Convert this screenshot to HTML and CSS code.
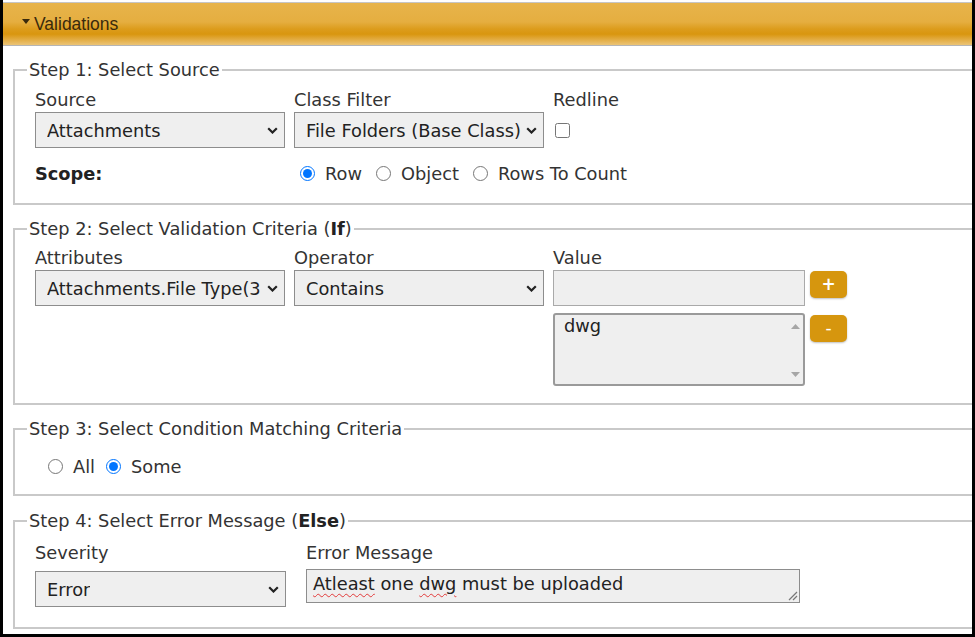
FILE: index.html
```html
<!DOCTYPE html>
<html>
<head>
<meta charset="utf-8">
<link rel="stylesheet" href="styles.css">
</head>
<body>
<div class="frame">
  <div class="header"><span class="tri"></span><span class="htitle">Validations</span></div>
  <div class="content">
    <fieldset class="fs fs1">
      <legend>Step 1: Select Source</legend>
      <div class="grid3">
        <div class="lbl">Source</div>
        <div class="lbl">Class Filter</div>
        <div class="lbl">Redline</div>
        <div class="sel"><span>Attachments</span><svg class="chev" width="11" height="7" viewBox="0 0 11 7"><path d="M1.2 1.2 L5.5 5.5 L9.8 1.2" fill="none" stroke="#222" stroke-width="2.2"/></svg></div>
        <div class="sel"><span>File Folders (Base Class)</span><svg class="chev" width="11" height="7" viewBox="0 0 11 7"><path d="M1.2 1.2 L5.5 5.5 L9.8 1.2" fill="none" stroke="#222" stroke-width="2.2"/></svg></div>
        <div class="cbcell"><input type="checkbox" class="cb"></div>
      </div>
      <div class="scope">
        <div class="scopelbl">Scope:</div>
        <div class="radios">
          <label class="ropt"><input type="radio" name="s" checked><span>Row</span></label>
          <label class="ropt"><input type="radio" name="s"><span>Object</span></label>
          <label class="ropt"><input type="radio" name="s"><span>Rows To Count</span></label>
        </div>
      </div>
    </fieldset>

    <fieldset class="fs fs2">
      <legend>Step 2: Select Validation Criteria (<b>If</b>)</legend>
      <div class="grid3">
        <div class="lbl">Attributes</div>
        <div class="lbl">Operator</div>
        <div class="lbl">Value</div>
        <div class="sel"><span>Attachments.File Type(3</span><svg class="chev" width="11" height="7" viewBox="0 0 11 7"><path d="M1.2 1.2 L5.5 5.5 L9.8 1.2" fill="none" stroke="#222" stroke-width="2.2"/></svg></div>
        <div class="sel"><span>Contains</span><svg class="chev" width="11" height="7" viewBox="0 0 11 7"><path d="M1.2 1.2 L5.5 5.5 L9.8 1.2" fill="none" stroke="#222" stroke-width="2.2"/></svg></div>
        <div class="valcol">
          <div class="valrow">
            <div class="vinput"></div>
            <div class="btn btnplus">+</div>
          </div>
          <div class="valrow listrow">
            <div class="listbox">
              <div class="litem">dwg</div>
              <div class="sbar">
                <svg width="9" height="5" viewBox="0 0 9 5"><path d="M0 5 L4.5 0 L9 5 Z" fill="#a6a6a6"/></svg>
                <svg width="9" height="5" viewBox="0 0 9 5"><path d="M0 0 L4.5 5 L9 0 Z" fill="#a6a6a6"/></svg>
              </div>
            </div>
            <div class="btn btnminus">-</div>
          </div>
        </div>
      </div>
    </fieldset>

    <fieldset class="fs fs3">
      <legend>Step 3: Select Condition Matching Criteria</legend>
      <div class="radios r3">
        <label class="ropt"><input type="radio" name="m"><span>All</span></label>
        <label class="ropt"><input type="radio" name="m" checked><span>Some</span></label>
      </div>
    </fieldset>

    <fieldset class="fs fs4">
      <legend>Step 4: Select Error Message (<b>Else</b>)</legend>
      <div class="grid2">
        <div class="lbl">Severity</div>
        <div class="lbl">Error Message</div>
        <div class="sel sel4"><span>Error</span><svg class="chev" width="11" height="7" viewBox="0 0 11 7"><path d="M1.2 1.2 L5.5 5.5 L9.8 1.2" fill="none" stroke="#222" stroke-width="2.2"/></svg></div>
        <div class="tarea"><span class="sp">Atleast</span> one <span class="sp">dwg</span> must be uploaded<svg class="grip" width="11" height="11" viewBox="0 0 11 11"><path d="M10 2 L2 10 M10 6 L6 10" stroke="#777" stroke-width="1.2"/></svg></div>
      </div>
    </fieldset>
  </div>
</div>
</body>
</html>
```

FILE: styles.css
```css
html, body {
  margin: 0;
  padding: 0;
  background: #fff;
}
.frame {
  width: 975px;
  height: 637px;
  box-sizing: border-box;
  border-left: 3px solid #000;
  border-right: 3px solid #000;
  border-bottom: 3px solid #000;
  padding-top: 2px;
  overflow: hidden;
  background: #fff;
  font-family: "DejaVu Sans", Verdana, sans-serif;
  font-size: 17.8px;
  color: #333;
}
.header {
  height: 42px;
  border-top: 1px solid #c6c6c6;
  border-bottom: 1px solid #b5b5b5;
  background: linear-gradient(to bottom, #e7b44b 0%, #e5ae40 45%, #dc9c1c 62%, #d9960f 74%, #e2aa3e 86%, #ebc476 100%);
  display: flex;
  align-items: center;
  padding-left: 19px;
  font-family: "Liberation Sans", Arial, sans-serif;
  font-size: 17.5px;
  color: #3a2a0c;
}
.tri {
  width: 0;
  height: 0;
  border-left: 4px solid transparent;
  border-right: 4px solid transparent;
  border-top: 5px solid #3a2a0c;
  margin-right: 4px;
  margin-top: -6px;
}
.htitle {
  margin-top: 1px;
}
.content {
  padding-left: 10px;
  margin-right: -40px;
}
.fs {
  margin: 0;
  border: 2px solid #c9c9c9;
  border-right: none;
  padding: 10px 0 0 20px;
}
.fs legend {
  margin-left: -8px;
  padding: 0 2px;
  line-height: 20px;
  color: #333;
}
.fs legend b {
  font-weight: bold;
  color: #222;
}
.fs1 { margin-top: 14px; padding-bottom: 17px; }
.fs2 { margin-top: 14px; padding-top: 9px; padding-bottom: 17px; }
.fs3 { margin-top: 14px; padding-top: 14px; padding-bottom: 15px; }
.fs4 { margin-top: 15px; padding-top: 12px; padding-bottom: 20px; }

.grid3 {
  display: grid;
  grid-template-columns: 250px 250px 300px;
  column-gap: 9px;
  row-gap: 2px;
  align-items: start;
}
.grid2 {
  display: grid;
  grid-template-columns: 251px 494px;
  column-gap: 20px;
  row-gap: 6px;
  align-items: start;
}
.lbl {
  line-height: 20px;
  height: 20px;
  color: #333;
  white-space: nowrap;
}
.sel {
  height: 36px;
  box-sizing: border-box;
  border: 1px solid #8d8d8d;
  background: #efefef;
  display: flex;
  align-items: center;
  justify-content: space-between;
  padding: 0 6px 0 11px;
  color: #222;
  white-space: nowrap;
  overflow: hidden;
}
.sel span {
  overflow: hidden;
}
.sel4 { margin-top: 2px; }
.chev { flex: none; margin-left: 3px; }
.cbcell {
  height: 36px;
  display: flex;
  align-items: center;
}
.cb {
  width: 15px;
  height: 15px;
  margin: 0 0 0 2px;
}
.scope {
  display: flex;
  align-items: center;
  height: 26px;
  margin-top: 12px;
}
.scopelbl {
  width: 265px;
  font-weight: bold;
  color: #222;
}
.radios {
  display: flex;
  align-items: center;
}
.ropt {
  display: flex;
  align-items: center;
  margin-right: 14px;
}
.ropt input {
  width: 15px;
  height: 15px;
  margin: 0 10px 0 0;
}
.r3 {
  height: 26px;
  padding-left: 13px;
}
.r3 .ropt { margin-right: 11px; }
.valcol {
  display: flex;
  flex-direction: column;
  gap: 7px;
}
.valrow {
  display: flex;
  align-items: flex-start;
  gap: 5px;
}
.vinput {
  width: 252px;
  height: 36px;
  box-sizing: border-box;
  border: 1px solid #a9a9a9;
  background: #efefef;
}
.btn {
  width: 37px;
  height: 27px;
  margin-top: 1px;
  border-radius: 5px;
  background: #d6960e;
  box-shadow: 0 1px 2px rgba(0,0,0,0.25);
  color: #fff;
  font-weight: bold;
  font-size: 17px;
  display: flex;
  align-items: center;
  justify-content: center;
  line-height: 1;
}
.btnminus { margin-top: 2px; font-weight: normal; }
.listbox {
  width: 252px;
  height: 73px;
  box-sizing: border-box;
  border: 2px solid #9a9a9a;
  border-radius: 3px;
  background: #efefef;
  display: flex;
  justify-content: space-between;
}
.litem {
  padding: 1px 0 0 9px;
  line-height: 20px;
  color: #222;
}
.sbar {
  width: 16px;
  display: flex;
  flex-direction: column;
  justify-content: space-between;
  align-items: center;
  padding: 9px 0 7px;
}
.sbar svg { display: block; }
.tarea {
  position: relative;
  width: 494px;
  height: 34px;
  box-sizing: border-box;
  border: 1px solid #8d8d8d;
  background: #efefef;
  padding: 3px 0 0 6px;
  line-height: 22px;
  color: #222;
  white-space: nowrap;
}
.sp {
  text-decoration: underline wavy #e23a3a;
  text-decoration-thickness: 1px;
  text-underline-offset: 3px;
}
.grip {
  position: absolute;
  right: 1px;
  bottom: 1px;
}
```
